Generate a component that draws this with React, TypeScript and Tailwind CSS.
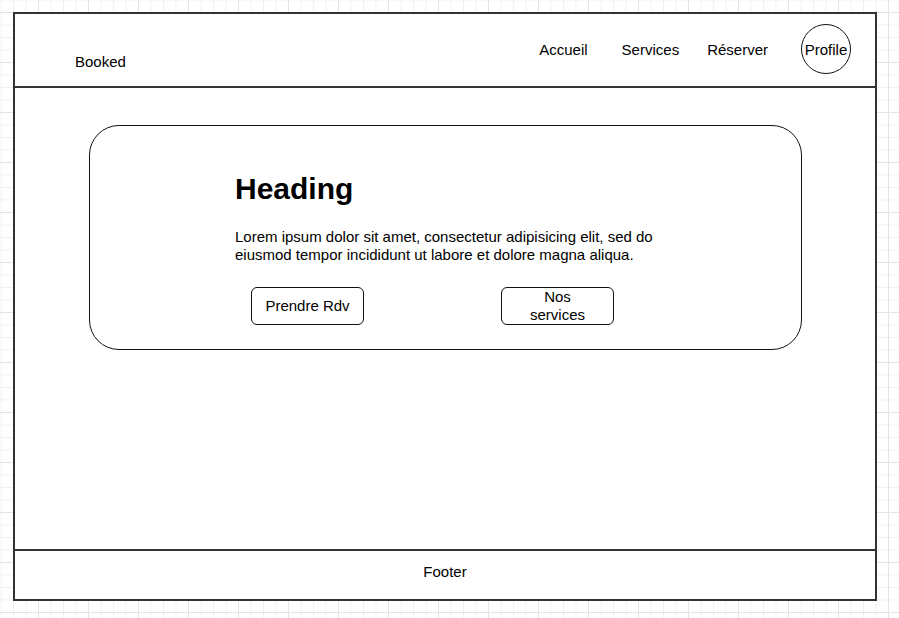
import React from "react";

export default function App() {
  return (
    <div className="h-[618px] w-[899px] overflow-hidden bg-white [background-image:linear-gradient(to_right,#e4e4e4_1px,transparent_1px),linear-gradient(to_bottom,#e4e4e4_1px,transparent_1px),linear-gradient(to_right,#f1f1f1_1px,transparent_1px),linear-gradient(to_bottom,#f1f1f1_1px,transparent_1px)] [background-size:50px_50px,50px_50px,12.5px_12.5px,12.5px_12.5px] [background-position:38px_12px] pt-[12px] pl-[13px] font-['Liberation_Sans',Arial,sans-serif] text-[15px] text-black">
      <div className="flex h-[589px] w-[864px] flex-col border-2 border-[#333] bg-white">
        <header className="flex h-[74px] shrink-0 items-start border-b-2 border-[#333]">
          <div className="ml-[60px] mt-[39px] leading-[17px]">Booked</div>
          <nav className="ml-auto mr-[24px] mt-[10px] flex h-[50px] items-center leading-[17px]">
            <span>Accueil</span>
            <span className="ml-[34px]">Services</span>
            <span className="ml-[28px]">Réserver</span>
            <span className="ml-[33px] flex h-[50px] w-[50px] items-center justify-center rounded-full border border-[#111]">
              Profile
            </span>
          </nav>
        </header>
        <main className="flex-1">
          <div className="ml-[74px] mt-[37px] h-[225px] w-[713px] rounded-[30px] border border-[#111] pl-[145px] pt-[46px]">
            <h1 className="text-[30px] font-bold leading-[34px]">Heading</h1>
            <p className="mt-[22px] w-[450px] leading-[18px]">
              Lorem ipsum dolor sit amet, consectetur adipisicing elit, sed do eiusmod tempor incididunt ut labore et dolore magna aliqua.
            </p>
            <div className="ml-[16px] mt-[23px] flex gap-[137px]">
              <button className="flex h-[38px] w-[113px] items-center justify-center rounded-[6px] border border-[#111] bg-white leading-[18px]">
                Prendre Rdv
              </button>
              <button className="flex h-[38px] w-[113px] items-center justify-center rounded-[6px] border border-[#111] bg-white text-center leading-[18px]">
                Nos
                <br />
                services
              </button>
            </div>
          </div>
        </main>
        <footer className="h-[50px] shrink-0 border-t-2 border-[#333] pt-[12px] text-center leading-[17px]">
          Footer
        </footer>
      </div>
    </div>
  );
}
